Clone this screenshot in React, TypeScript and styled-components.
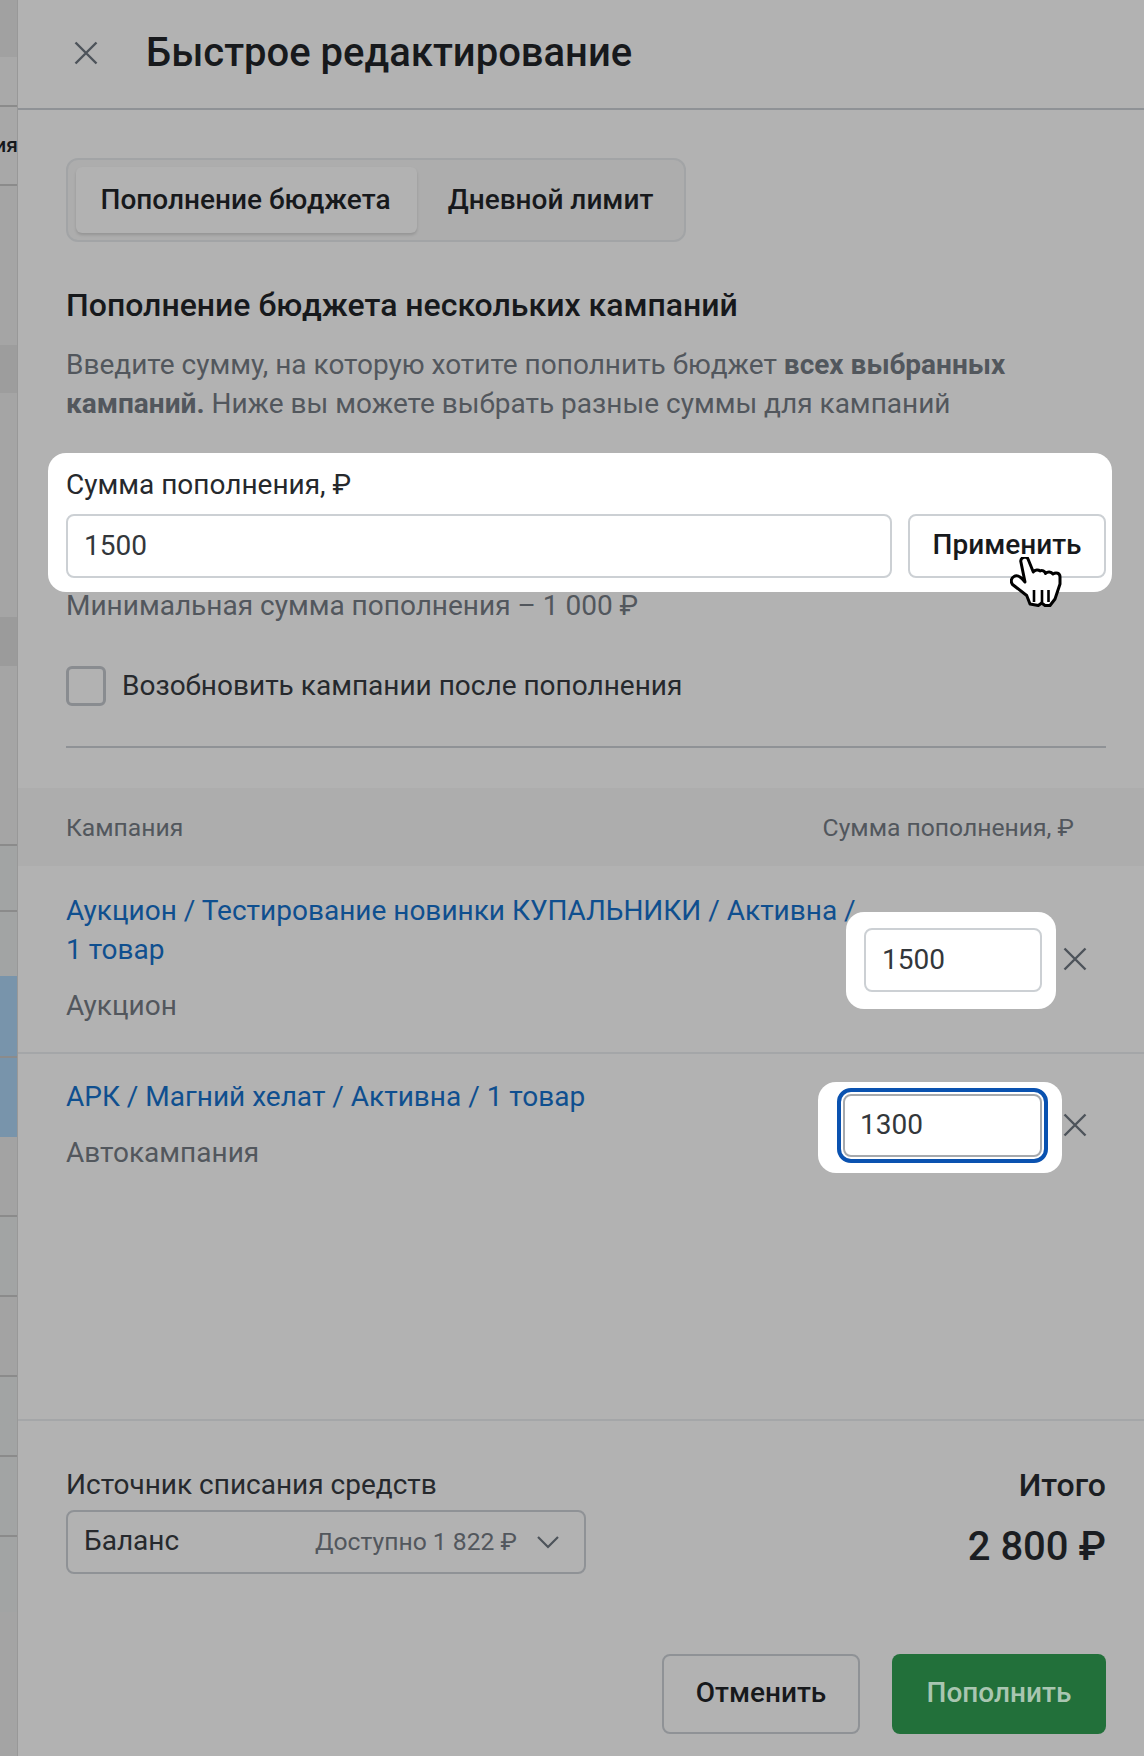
import styled, { createGlobalStyle } from 'styled-components';

const GlobalStyle = createGlobalStyle`
    html, body {
        margin: 0;
        padding: 0;
        background: #b2b2b2;
    }
    * {
        box-sizing: border-box;
    }
`;

// table rows of the page behind the drawer, only a thin strip stays visible
const strip = [
    { height: 57, color: '#a1a1a1' },
    { height: 50, color: '#a9a9a9', line: true },
    { height: 79, color: '#a8a8a8', line: true },
    { height: 159, color: '#a5a5a5' },
    { height: 48, color: '#9d9d9d' },
    { height: 224, color: '#a5a5a5' },
    { height: 49, color: '#9b9b9b' },
    { height: 180, color: '#a5a5a5', line: true },
    { height: 66, color: '#a2a4a4', line: true },
    { height: 64, color: '#a2a4a4' },
    { height: 82, color: '#7894ab', line: true },
    { height: 79, color: '#7894ab' },
    { height: 80, color: '#a3a3a3', line: true },
    { height: 80, color: '#a2a4a4', line: true },
    { height: 80, color: '#a3a3a3', line: true },
    { height: 80, color: '#a2a4a4', line: true },
    { height: 80, color: '#a2a4a4', line: true },
    { height: 75, color: '#a2a4a4' },
    { height: 144, color: '#a4a4a4' },
];

const RubleSign = () => <span>₽</span>;

const CloseIcon = ({ size }: { size: number }) => (
    <svg width={size} height={size} viewBox="0 0 24 24" fill="none" stroke="#4d535a" strokeWidth="2.4">
        <path d="M1.5 1.5 L22.5 22.5 M22.5 1.5 L1.5 22.5" />
    </svg>
);

const App = () => (
    <Page>
        <GlobalStyle />
        <Backdrop>
            {strip.map((s, i) => (
                <StripBand key={i} $height={s.height} $color={s.color} $line={s.line} />
            ))}
            <CutText>ия</CutText>
        </Backdrop>
        <Drawer>
            <Header>
                <HeaderClose>
                    <CloseIcon size={24} />
                </HeaderClose>
                <Title>Быстрое редактирование</Title>
            </Header>
            <Body>
                <Tabs>
                    <ActiveTab>Пополнение бюджета</ActiveTab>
                    <Tab>Дневной лимит</Tab>
                </Tabs>
                <Heading>Пополнение бюджета нескольких кампаний</Heading>
                <Description>
                    Введите сумму, на которую хотите пополнить бюджет <b>всех выбранных кампаний.</b> Ниже вы можете выбрать разные суммы для кампаний
                </Description>
                <AmountCard>
                    <FieldLabel>
                        Сумма пополнения, <RubleSign />
                    </FieldLabel>
                    <AmountRow>
                        <AmountInput readOnly value="1500" />
                        <ApplyButton>Применить</ApplyButton>
                    </AmountRow>
                    <Cursor width="52" height="50" viewBox="0 0 52 50">
                        <path
                            d="M10.7 4 C11 0 17 -1 18 2 L23.3 15 C25 12.5 28.5 12.5 30 14 C32 12.8 35 14 35.5 16.5 C37.5 14.5 41 14.5 43 17 C46 15 50 16 50 20 L50 27 L45 42 L40 48.5 L35 48.5 L31.7 46 L28.3 48.5 L20 47 L16.7 38.5 L2.5 27.5 C0.5 25 1 21 4 19.5 C7 17.5 10 18.5 15 25 Z"
                            fill="#fff"
                            stroke="#000"
                            strokeWidth="3"
                            strokeLinejoin="round"
                        />
                        <path d="M24 33 V45 M32 33 V45 M38.500 33 V45" stroke="#000" strokeWidth="2.6" />
                    </Cursor>
                </AmountCard>
                <Hint>
                    Минимальная сумма пополнения – 1 000 <RubleSign />
                </Hint>
                <CheckRow>
                    <CheckBox />
                    <CheckLabel>Возобновить кампании после пополнения</CheckLabel>
                </CheckRow>
                <Divider />
            </Body>
            <TableHead>
                <span>Кампания</span>
                <span>
                    Сумма пополнения, <RubleSign />
                </span>
            </TableHead>
            <CampaignRow $height={188} $paddingTop={25}>
                <CampaignInfo>
                    <CampaignLink>Аукцион / Тестирование новинки КУПАЛЬНИКИ / Активна / 1 товар</CampaignLink>
                    <CampaignType>Аукцион</CampaignType>
                </CampaignInfo>
                <RowHighlight>
                    <RowInput readOnly value="1500" />
                </RowHighlight>
                <RowClose $top={81}>
                    <CloseIcon size={24} />
                </RowClose>
            </CampaignRow>
            <CampaignRow $height={367} $paddingTop={23}>
                <CampaignInfo>
                    <CampaignLink>АРК / Магний хелат / Активна / 1 товар</CampaignLink>
                    <CampaignType>Автокампания</CampaignType>
                </CampaignInfo>
                <FocusHighlight>
                    <FocusRing>
                        <FocusedInput readOnly value="1300" />
                    </FocusRing>
                </FocusHighlight>
                <RowClose $top={59}>
                    <CloseIcon size={24} />
                </RowClose>
            </CampaignRow>
            <Footer>
                <FooterTop>
                    <SourceColumn>
                        <SourceLabel>Источник списания средств</SourceLabel>
                        <SourceSelect>
                            <SourceName>Баланс</SourceName>
                            <SourceMeta>
                                Доступно 1 822 <RubleSign />
                            </SourceMeta>
                            <svg width="24" height="16" viewBox="0 0 24 16" fill="none" stroke="#4d535a" strokeWidth="2.2">
                                <path d="M2 3 L12 13 L22 3" />
                            </svg>
                        </SourceSelect>
                    </SourceColumn>
                    <TotalColumn>
                        <TotalLabel>Итого</TotalLabel>
                        <TotalValue>
                            2 800 <RubleSign />
                        </TotalValue>
                    </TotalColumn>
                </FooterTop>
                <Actions>
                    <CancelButton>Отменить</CancelButton>
                    <SubmitButton>Пополнить</SubmitButton>
                </Actions>
            </Footer>
        </Drawer>
    </Page>
);

export default App;

const Page = styled.div`
    width: 1144px;
    height: 1756px;
    display: flex;
    overflow: hidden;
    font-family: Roboto, 'Liberation Sans', sans-serif;
    color: #1b1e22;
    background: #b2b2b2;
`;

const Backdrop = styled.div`
    position: relative;
    width: 18px;
    flex: none;
    overflow: hidden;
    border-right: 1px solid #989898;
`;

const StripBand = styled.div<{ $height: number; $color: string; $line?: boolean }>`
    height: ${(props) => props.$height}px;
    background: ${(props) => props.$color};
    border-bottom: ${(props) => (props.$line ? '2px solid #8b8b8b' : 'none')};
`;

const CutText = styled.div`
    position: absolute;
    top: 133px;
    right: -1px;
    font-size: 21px;
    font-weight: 500;
    color: #15181c;
    white-space: nowrap;
`;

const Drawer = styled.div`
    flex: 1;
    min-width: 0;
    display: flex;
    flex-direction: column;
    background: #b2b2b2;
`;

const Header = styled.div`
    height: 110px;
    flex: none;
    display: flex;
    align-items: center;
    gap: 47px;
    padding: 0 48px 3px 56px;
    border-bottom: 2px solid #8f9296;
`;

const HeaderClose = styled.div`
    display: flex;
    width: 25px;
`;

const Title = styled.div`
    font-size: 40px;
    font-weight: 500;
    color: #17191c;
`;

const Body = styled.div`
    flex: none;
    display: flex;
    flex-direction: column;
    align-items: flex-start;
    padding: 48px 38px 0 48px;
    height: 678px;
`;

const Tabs = styled.div`
    display: flex;
    align-items: center;
    height: 84px;
    width: 620px;
    padding: 0 8px;
    border: 2px solid #a2a4a6;
    border-radius: 12px;
    background: #adadad;
`;

const Tab = styled.div`
    flex: 1;
    height: 66px;
    display: flex;
    align-items: center;
    justify-content: center;
    padding: 0 0 2px 8px;
    font-size: 28px;
    font-weight: 500;
    color: #17191c;
`;

const ActiveTab = styled(Tab)`
    flex: none;
    width: 341px;
    padding-left: 0;
    padding-right: 2px;
    background: #b2b2b2;
    border-radius: 6px;
    box-shadow: 0 2px 3px rgba(0, 0, 0, 0.14);
`;

const Heading = styled.div`
    margin-top: 43px;
    font-size: 32px;
    line-height: 40px;
    font-weight: 500;
    color: #17191c;
`;

const Description = styled.div`
    margin-top: 20px;
    font-size: 28px;
    line-height: 39px;
    color: #52575d;

    b {
        font-weight: 700;
    }
`;

const AmountCard = styled.div`
    position: relative;
    width: 1064px;
    height: 139px;
    margin: 30px 0 0 -18px;
    padding: 15px 6px 0 18px;
    background: #fff;
    border-radius: 18px;
`;

const FieldLabel = styled.div`
    font-size: 28px;
    line-height: 34px;
    color: #26292d;
`;

const AmountRow = styled.div`
    display: flex;
    gap: 15px;
    margin-top: 12px;
`;

const AmountInput = styled.input`
    flex: none;
    width: 826px;
    height: 64px;
    padding: 0 16px 2px;
    border: 2px solid #ccd0d4;
    border-radius: 8px;
    font: 400 28px Roboto, sans-serif;
    color: #33373b;
    outline: none;
`;

const ApplyButton = styled.div`
    width: 198px;
    height: 64px;
    margin-left: 1px;
    display: flex;
    align-items: center;
    justify-content: center;
    padding-bottom: 3px;
    border: 2px solid #ccd0d4;
    border-radius: 8px;
    font-size: 28px;
    font-weight: 500;
    color: #17191c;
`;

const Cursor = styled.svg`
    position: absolute;
    left: 962px;
    top: 104px;
`;

const Hint = styled.div`
    margin-top: -4px;
    font-size: 28px;
    line-height: 36px;
    color: #52575d;
`;

const CheckRow = styled.div`
    display: flex;
    align-items: center;
    gap: 16px;
    margin-top: 42px;
`;

const CheckBox = styled.div`
    width: 40px;
    height: 40px;
    border: 3px solid #898c90;
    border-radius: 6px;
`;

const CheckLabel = styled.div`
    padding-bottom: 2px;
    font-size: 28px;
    color: #26292d;
`;

const Divider = styled.div`
    width: 100%;
    height: 2px;
    margin-top: 40px;
    background: #8f9296;
`;

const TableHead = styled.div`
    height: 78px;
    flex: none;
    display: flex;
    align-items: center;
    justify-content: space-between;
    padding: 0 70px 0 48px;
    background: #adadad;
    font-size: 24.7px;
    color: #52575d;
`;

const CampaignRow = styled.div<{ $height: number; $paddingTop: number }>`
    position: relative;
    height: ${(props) => props.$height}px;
    flex: none;
    display: flex;
    padding: ${(props) => props.$paddingTop}px 38px 0 48px;
    border-bottom: 2px solid #a4a6a8;
`;

const CampaignInfo = styled.div`
    width: 800px;
`;

const CampaignLink = styled.div`
    font-size: 28px;
    line-height: 39px;
    color: #0f4f8f;
`;

const CampaignType = styled.div`
    margin-top: 17px;
    font-size: 28px;
    line-height: 39px;
    color: #52575d;
`;

const RowHighlight = styled.div`
    position: absolute;
    left: 828px;
    top: 46px;
    width: 210px;
    height: 97px;
    padding: 16px 18px;
    background: #fff;
    border-radius: 18px;
`;

const RowInput = styled.input`
    width: 178px;
    height: 64px;
    padding: 0 16px 2px;
    border: 2px solid #ccd0d4;
    border-radius: 8px;
    font: 400 28px Roboto, sans-serif;
    color: #33373b;
    outline: none;
`;

const FocusHighlight = styled.div`
    position: absolute;
    left: 800px;
    top: 28px;
    width: 244px;
    height: 91px;
    padding: 6px 19px;
    background: #fff;
    border-radius: 18px;
`;

const FocusRing = styled.div`
    width: 211px;
    height: 75px;
    padding: 2px;
    border: 4px solid #0a52b0;
    border-radius: 14px;
`;

const FocusedInput = styled(RowInput)`
    display: block;
    width: 199px;
    height: 63px;
    padding: 0 15px 2px;
    border-color: #a6a9ad;
`;

const RowClose = styled.div<{ $top: number }>`
    position: absolute;
    left: 1045px;
    top: ${(props) => props.$top}px;
    display: flex;
`;

const Footer = styled.div`
    flex: 1;
    display: flex;
    flex-direction: column;
    justify-content: space-between;
    padding: 46px 38px 22px 48px;
`;

const FooterTop = styled.div`
    display: flex;
    justify-content: space-between;
`;

const SourceColumn = styled.div`
    display: flex;
    flex-direction: column;
    gap: 7px;
`;

const SourceLabel = styled.div`
    font-size: 28px;
    line-height: 36px;
    color: #26292d;
`;

const SourceSelect = styled.div`
    width: 520px;
    height: 64px;
    display: flex;
    align-items: center;
    padding: 0 24px 0 16px;
    border: 2px solid #8f9296;
    border-radius: 8px;
`;

const SourceName = styled.div`
    flex: 1;
    padding-bottom: 3px;
    font-size: 28px;
    color: #26292d;
`;

const SourceMeta = styled.div`
    margin-right: 19px;
    padding-bottom: 2px;
    font-size: 24.7px;
    color: #52575d;
`;

const TotalColumn = styled.div`
    display: flex;
    flex-direction: column;
    align-items: flex-end;
`;

const TotalLabel = styled.div`
    font-size: 32px;
    line-height: 36px;
    font-weight: 500;
`;

const TotalValue = styled.div`
    margin-top: 20px;
    font-size: 40px;
    line-height: 48px;
    font-weight: 500;
`;

const Actions = styled.div`
    display: flex;
    justify-content: flex-end;
    gap: 32px;
`;

const BaseButton = styled.div`
    height: 80px;
    display: flex;
    align-items: center;
    justify-content: center;
    padding-bottom: 3px;
    border-radius: 8px;
    font-size: 28px;
    font-weight: 500;
`;

const CancelButton = styled(BaseButton)`
    width: 198px;
    border: 2px solid #8f9296;
    color: #17191c;
`;

const SubmitButton = styled(BaseButton)`
    width: 214px;
    background: #22703a;
    color: #a9c6b1;
`;
